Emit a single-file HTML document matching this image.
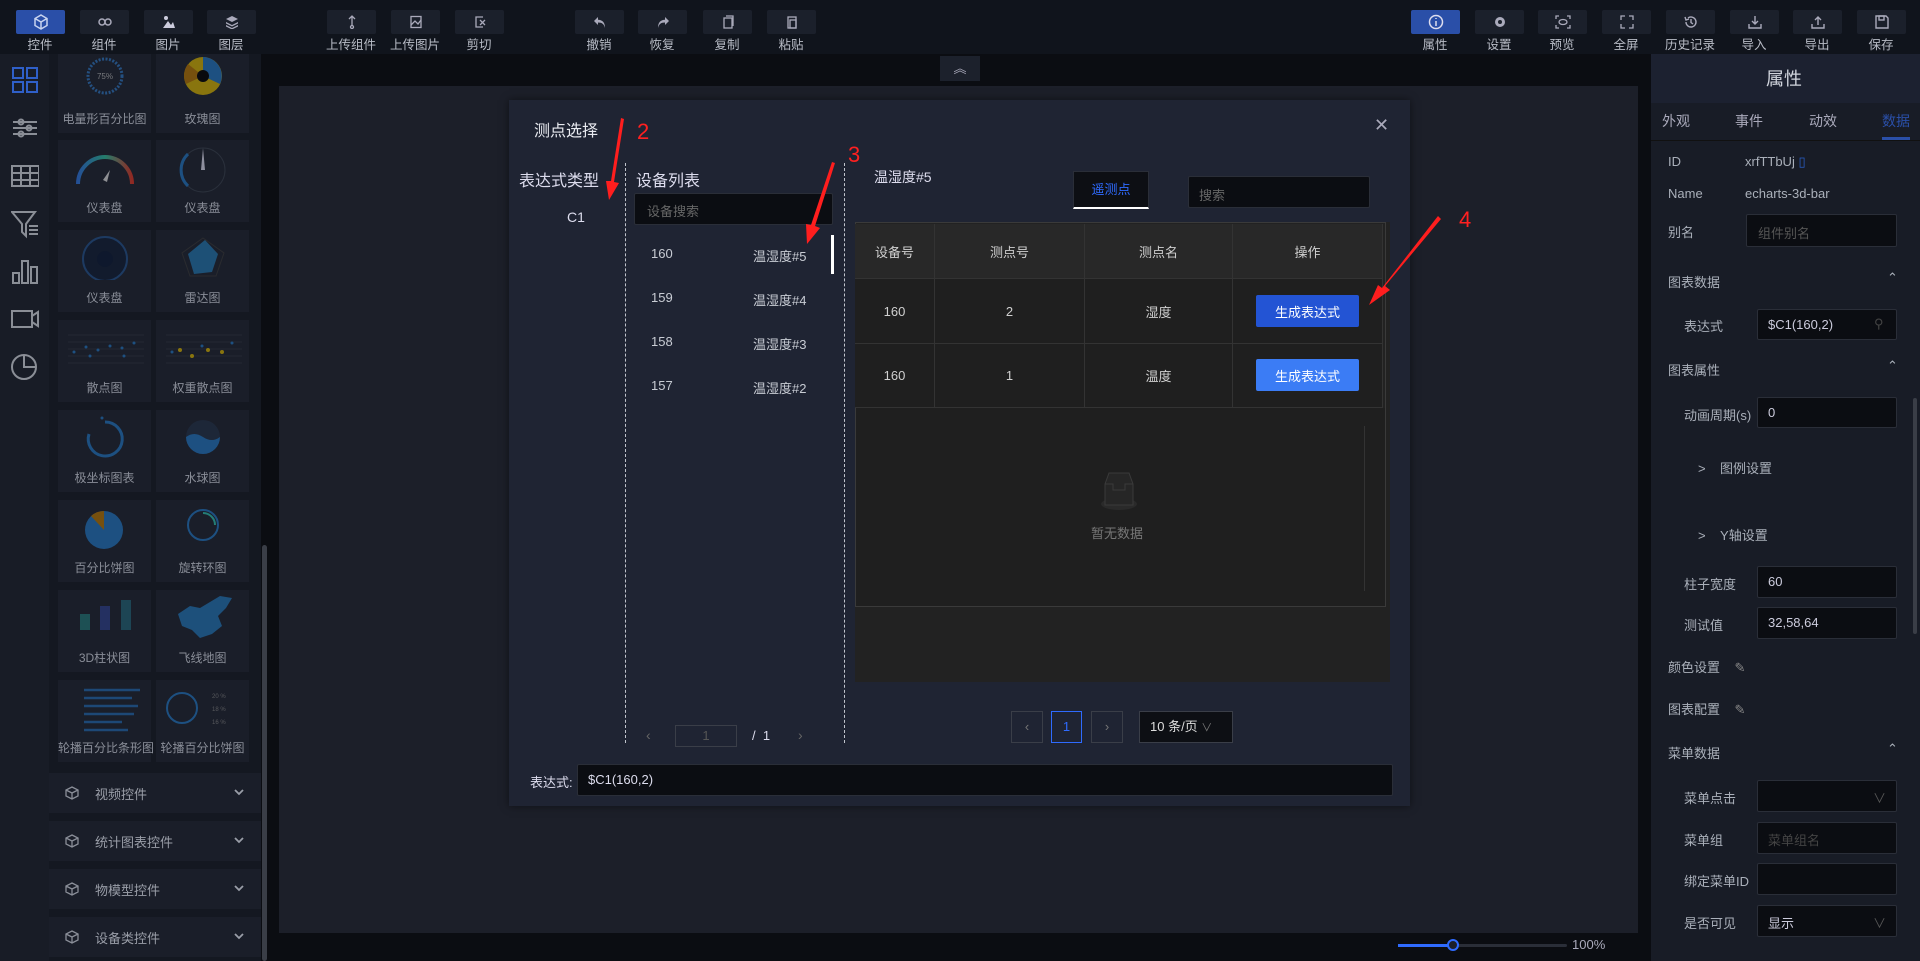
<!DOCTYPE html>
<html><head><meta charset="utf-8"><style>
*{margin:0;padding:0;box-sizing:border-box}
body{width:1920px;height:961px;overflow:hidden;background:#0b0d12;font-family:"Liberation Sans","Noto Sans CJK SC",sans-serif;color:#c8ccd4;font-size:13px;position:relative}
.a{position:absolute}
.tb{position:absolute;top:0;left:0;width:1920px;height:54px;background:#10141c}
.btn{position:absolute;top:10px;width:49px;height:24px;background:#1b202b;border-radius:2px;display:flex;align-items:center;justify-content:center}
.btn.on{background:#2a4fa8}
.lbl{position:absolute;top:34px;width:70px;text-align:center;font-size:12.5px;color:#b8bcc6}
.card{position:absolute;width:93px;height:82px;background:#1a1e29}
.card svg{opacity:.65}
.card span{position:absolute;bottom:6px;left:0;width:100%;text-align:center;font-size:12px;color:#8a8e98;white-space:nowrap}
.acc{position:absolute;left:49px;width:212px;height:40px;background:#1a1e29;color:#9a9ea8;font-size:13px}
.t{position:absolute;white-space:nowrap}
.inp{position:absolute;background:#0b0d12;border:1px solid #2a2e38;border-radius:2px}
.cell{position:absolute;display:flex;align-items:center;justify-content:center;font-size:13px;color:#d0d0d0;border-right:1px solid #333;border-bottom:1px solid #333}
.gb{position:absolute;width:103px;height:32px;border-radius:2px;color:#fff;display:flex;align-items:center;justify-content:center;font-size:13px}
.rl{position:absolute;font-size:13px;color:#aab0ba;white-space:nowrap}
</style></head><body>
<div class="tb">
<div class="btn on" style="left:16px"><svg width="14" height="16" viewBox="0 0 14 16" fill="none" stroke="#c8d4f0" stroke-width="1.5"><path d="M7 1 13 4.5V11.5L7 15 1 11.5V4.5Z M1 4.5 7 8 13 4.5 M7 8V15"/></svg></div>
<div class="btn" style="left:80px"><svg width="14" height="10" fill="none" stroke="#aab" stroke-width="1.5"><ellipse cx="4" cy="5" rx="3" ry="3"/><ellipse cx="10" cy="5" rx="3" ry="3"/></svg></div>
<div class="btn" style="left:144px"><svg width="14" height="14"><circle cx="4" cy="3" r="2" fill="#ccd"/><path d="M1 13 6 6 9 10 11 7 13 13Z" fill="#ccd"/></svg></div>
<div class="btn" style="left:207px"><svg width="14" height="14" fill="#aab"><path d="M7 1 13 4 7 7 1 4Z"/><path d="M1 7 7 10 13 7V8.5L7 11.5 1 8.5Z"/><path d="M1 10 7 13 13 10V11.5L7 14.5 1 11.5Z"/></svg></div>
<div class="btn" style="left:327px"><svg width="14" height="14" fill="none" stroke="#aab" stroke-width="1.3"><path d="M7 1V10M4 4 7 1 10 4"/><circle cx="7" cy="12" r="1.5"/></svg></div>
<div class="btn" style="left:391px"><svg width="14" height="14" fill="none" stroke="#aab" stroke-width="1.3"><rect x="2" y="1.5" width="10" height="11"/><path d="M2 10 6 6 9 9 12 5"/></svg></div>
<div class="btn" style="left:455px"><svg width="14" height="14" fill="none" stroke="#aab" stroke-width="1.3"><path d="M10 2H3V12H10"/><path d="M7 5 12 10M12 5 7 10"/></svg></div>
<div class="btn" style="left:575px"><svg width="14" height="14" fill="#aab"><path d="M5 2 1 6 5 10V7.5C9 7.5 11 9 12 13 12 7 9 5 5 4.8Z"/></svg></div>
<div class="btn" style="left:638px"><svg width="14" height="14" fill="#aab"><path d="M9 2 13 6 9 10V7.5C5 7.5 3 9 2 13 2 7 5 5 9 4.8Z"/></svg></div>
<div class="btn" style="left:703px"><svg width="14" height="14" fill="none" stroke="#aab" stroke-width="1.3"><rect x="3" y="3" width="8" height="10"/><path d="M5 1H12V11"/></svg></div>
<div class="btn" style="left:767px"><svg width="14" height="14" fill="none" stroke="#aab" stroke-width="1.3"><rect x="3" y="2" width="8" height="11"/><rect x="5" y="5" width="6" height="8"/></svg></div>
<div class="btn on" style="left:1411px"><svg width="16" height="16" fill="none" stroke="#dde" stroke-width="1.5"><circle cx="8" cy="8" r="6.5"/><path d="M8 7V12M8 4V5"/></svg></div>
<div class="btn" style="left:1475px"><svg width="14" height="14"><circle cx="7" cy="7" r="5" fill="#aab"/><circle cx="7" cy="7" r="2" fill="#1b202b"/></svg></div>
<div class="btn" style="left:1538px"><svg width="16" height="14" fill="none" stroke="#aab" stroke-width="1.3"><path d="M1 4V1H4M12 1H15V4M15 10V13H12M4 13H1V10"/><ellipse cx="8" cy="7" rx="4" ry="2.5"/></svg></div>
<div class="btn" style="left:1602px"><svg width="14" height="14" fill="none" stroke="#aab" stroke-width="1.3"><path d="M1 5V1H5M9 1H13V5M13 9V13H9M5 13H1V9"/></svg></div>
<div class="btn" style="left:1666px"><svg width="14" height="14" fill="none" stroke="#aab" stroke-width="1.4"><path d="M2 7A5 5 0 1 0 4 3"/><path d="M7 4V7.5L9 9M1 2 2 5 5 4"/></svg></div>
<div class="btn" style="left:1730px"><svg width="14" height="14" fill="none" stroke="#aab" stroke-width="1.4"><path d="M7 1V9M4 6 7 9 10 6M1 9V13H13V9"/></svg></div>
<div class="btn" style="left:1793px"><svg width="14" height="14" fill="none" stroke="#aab" stroke-width="1.4"><path d="M7 10V2M4 5 7 2 10 5M1 9V13H13V9"/></svg></div>
<div class="btn" style="left:1857px"><svg width="14" height="14" fill="none" stroke="#aab" stroke-width="1.4"><path d="M1 1H11L13 3V13H1Z"/><rect x="4" y="1" width="5" height="4"/></svg></div>
<div class="lbl" style="left:5px">控件</div><div class="lbl" style="left:69px">组件</div><div class="lbl" style="left:133px">图片</div><div class="lbl" style="left:196px">图层</div>
<div class="lbl" style="left:316px">上传组件</div><div class="lbl" style="left:380px">上传图片</div><div class="lbl" style="left:444px">剪切</div>
<div class="lbl" style="left:564px">撤销</div><div class="lbl" style="left:627px">恢复</div><div class="lbl" style="left:692px">复制</div><div class="lbl" style="left:756px">粘贴</div>
<div class="lbl" style="left:1400px">属性</div><div class="lbl" style="left:1464px">设置</div><div class="lbl" style="left:1527px">预览</div><div class="lbl" style="left:1591px">全屏</div><div class="lbl" style="left:1655px">历史记录</div><div class="lbl" style="left:1719px">导入</div><div class="lbl" style="left:1782px">导出</div><div class="lbl" style="left:1846px">保存</div>
</div>

<div class="a" style="left:0;top:54px;width:49px;height:907px;background:#181c26"></div>
<svg class="a" style="left:11px;top:66px" width="28" height="320" fill="none" stroke="#8a8e96" stroke-width="2">
<g stroke="#2f5fc8"><rect x="2" y="2" width="10" height="10"/><rect x="16" y="2" width="10" height="10"/><rect x="2" y="16" width="10" height="10"/><rect x="16" y="16" width="10" height="10"/></g>
<path d="M2 56H26M2 62H26M2 68H26"/><circle cx="10" cy="56" r="2.5"/><circle cx="18" cy="62" r="2.5"/><circle cx="10" cy="68" r="2.5"/>
<rect x="1" y="100" width="27" height="20"/><path d="M1 107H28M1 114H28M10 100V120M19 100V120"/>
<path d="M1 146H24L15 158V170L11 166V158Z M18 160H27M18 164H27M18 168H27"/>
<rect x="2" y="207" width="6" height="10"/><rect x="11" y="195" width="6" height="22"/><rect x="20" y="201" width="6" height="16"/>
<rect x="1" y="245" width="20" height="16"/><path d="M21 250 27 246V260L21 256"/>
<circle cx="13" cy="301" r="12"/><path d="M13 289V301H25"/>
</svg>

<div class="a" style="left:49px;top:54px;width:212px;height:907px;background:#141821"></div>
<div class="card" style="left:58px;top:54px;height:79px"><svg class="a" style="left:27px;top:2px" width="40" height="40"><circle cx="20" cy="20" r="17" fill="none" stroke="#2a6bb0" stroke-width="3" stroke-dasharray="2 1.5"/><text x="20" y="23" fill="#aaa" font-size="8" text-anchor="middle">75%</text></svg><span>电量形百分比图</span></div>
<div class="card" style="left:156px;top:54px;height:79px"><svg class="a" style="left:20px;top:2px" width="54" height="44"><circle cx="27" cy="20" r="19" fill="#c5a400"/><path d="M27 20V1A19 19 0 0 1 44 28Z" fill="#1f6bb0"/><path d="M27 20 10 28A19 19 0 0 1 12 8Z" fill="#a86b00"/><circle cx="27" cy="20" r="6" fill="#000"/></svg><span>玫瑰图</span></div>
<div class="card" style="left:58px;top:140px"><svg class="a" style="left:16px;top:10px" width="62" height="36"><path d="M4 34A27 27 0 0 1 58 34" fill="none" stroke="url(#g1)" stroke-width="4"/><defs><linearGradient id="g1"><stop offset="0" stop-color="#2a6bd0"/><stop offset=".5" stop-color="#2ab090"/><stop offset="1" stop-color="#d03020"/></linearGradient></defs><path d="M29 30 36 20 33 32Z" fill="#ccc"/></svg><span>仪表盘</span></div>
<div class="card" style="left:156px;top:140px"><svg class="a" style="left:20px;top:4px" width="54" height="50"><circle cx="27" cy="26" r="22" fill="none" stroke="#333a46" stroke-width="1"/><path d="M12 42A22 22 0 0 1 12 10" fill="none" stroke="#1f6bb0" stroke-width="3"/><path d="M27 4 29 26 25 26Z" fill="#ccd"/></svg><span>仪表盘</span></div>
<div class="card" style="left:58px;top:230px"><svg class="a" style="left:20px;top:4px" width="54" height="46"><circle cx="27" cy="25" r="22" fill="#0f1a30" stroke="#1f4a80" stroke-width="2"/><circle cx="27" cy="25" r="8" fill="#081530"/></svg><span>仪表盘</span></div>
<div class="card" style="left:156px;top:230px"><svg class="a" style="left:20px;top:4px" width="54" height="46"><path d="M27 4 48 19 40 42 14 42 6 19Z" fill="none" stroke="#333"/><path d="M29 6 42 20 36 38 18 40 12 20Z" fill="#1f6ba0"/></svg><span>雷达图</span></div>
<div class="card" style="left:58px;top:320px"><svg class="a" style="left:6px;top:10px" width="82" height="40" fill="#1f6bb0"><path d="M4 5H80M4 12H80M4 19H80M4 26H80M4 33H80" stroke="#2a2e38"/><circle cx="10" cy="22" r="1.5"/><circle cx="22" cy="17" r="1.5"/><circle cx="34" cy="20" r="1.5"/><circle cx="46" cy="16" r="1.5"/><circle cx="58" cy="18" r="1.5"/><circle cx="70" cy="13" r="1.5"/><circle cx="26" cy="26" r="1.5"/><circle cx="60" cy="26" r="1.5"/></svg><span>散点图</span></div>
<div class="card" style="left:156px;top:320px"><svg class="a" style="left:6px;top:10px" width="82" height="40" fill="#1f6bb0"><path d="M4 5H80M4 12H80M4 19H80M4 26H80M4 33H80" stroke="#2a2e38"/><circle cx="18" cy="20" r="2" fill="#c5a400"/><circle cx="30" cy="26" r="2" fill="#c5a400"/><circle cx="46" cy="20" r="2" fill="#c5a400"/><circle cx="60" cy="22" r="2" fill="#c5a400"/><circle cx="10" cy="22" r="1.5"/><circle cx="40" cy="16" r="1.5"/><circle cx="70" cy="13" r="1.5"/></svg><span>权重散点图</span></div>
<div class="card" style="left:58px;top:410px"><svg class="a" style="left:24px;top:4px" width="46" height="46"><path d="M23 8A17 17 0 1 1 7 20" fill="none" stroke="#1f6bb0" stroke-width="3"/><circle cx="20" cy="4" r="1.5" fill="#1f6bb0"/></svg><span>极坐标图表</span></div>
<div class="card" style="left:156px;top:410px"><svg class="a" style="left:24px;top:4px" width="46" height="46"><circle cx="23" cy="23" r="17" fill="#1f2c40"/><path d="M6 23Q14 17 23 23T40 23A17 17 0 0 1 6 23Z" fill="#1f6bb0"/></svg><span>水球图</span></div>
<div class="card" style="left:58px;top:500px"><svg class="a" style="left:20px;top:6px" width="56" height="46"><circle cx="26" cy="24" r="19" fill="#1f6bb0"/><path d="M26 24V5A19 19 0 0 0 13 10Z" fill="#a86b00"/></svg><span>百分比饼图</span></div>
<div class="card" style="left:156px;top:500px"><svg class="a" style="left:26px;top:4px" width="42" height="42"><circle cx="21" cy="21" r="15" fill="none" stroke="#1f6bb0" stroke-width="2"/><path d="M21 9A12 12 0 0 1 33 21" fill="none" stroke="#2ab0a0" stroke-width="2"/></svg><span>旋转环图</span></div>
<div class="card" style="left:58px;top:590px"><svg class="a" style="left:12px;top:8px" width="70" height="40"><rect x="10" y="16" width="10" height="16" fill="#1f6b6b"/><rect x="30" y="8" width="10" height="24" fill="#2a3a80"/><rect x="51" y="2" width="10" height="30" fill="#1f5a6b"/></svg><span>3D柱状图</span></div>
<div class="card" style="left:156px;top:590px"><svg class="a" style="left:14px;top:4px" width="66" height="48"><path d="M8 20 20 12 30 14 40 8 50 2 62 4 56 14 48 22 52 32 42 40 30 44 22 36 12 32Z" fill="#1f6ba8"/></svg><span>飞线地图</span></div>
<div class="card" style="left:58px;top:680px"><svg class="a" style="left:8px;top:6px" width="80" height="50" stroke-width="2.5"><g stroke="#1f5fa0"><path d="M18 4H74M18 12H66M18 20H72M18 28H68M18 36H56M18 44H62"/></g></svg><span>轮播百分比条形图</span></div>
<div class="card" style="left:156px;top:680px"><svg class="a" style="left:6px;top:8px" width="84" height="44"><circle cx="20" cy="20" r="15" fill="none" stroke="#1f6bb0" stroke-width="2"/><g fill="#777" font-size="6"><text x="50" y="10">20 %</text><text x="50" y="23">18 %</text><text x="50" y="36">16 %</text></g></svg><span>轮播百分比饼图</span></div>
<div class="acc" style="top:773px"><svg class="a" style="left:16px;top:13px" width="14" height="14" fill="none" stroke="#8a8e98" stroke-width="1.3"><path d="M7 1 13 4V10L7 13 1 10V4Z M1 4 7 7 13 4M7 7V13"/></svg><div class="t" style="left:46px;top:11px">视频控件</div><svg class="a" style="left:185px;top:16px" width="10" height="7" fill="none" stroke="#9a9ea8" stroke-width="1.8"><path d="M1 1 5 5 9 1"/></svg></div>
<div class="acc" style="top:821px"><svg class="a" style="left:16px;top:13px" width="14" height="14" fill="none" stroke="#8a8e98" stroke-width="1.3"><path d="M7 1 13 4V10L7 13 1 10V4Z M1 4 7 7 13 4M7 7V13"/></svg><div class="t" style="left:46px;top:11px">统计图表控件</div><svg class="a" style="left:185px;top:16px" width="10" height="7" fill="none" stroke="#9a9ea8" stroke-width="1.8"><path d="M1 1 5 5 9 1"/></svg></div>
<div class="acc" style="top:869px"><svg class="a" style="left:16px;top:13px" width="14" height="14" fill="none" stroke="#8a8e98" stroke-width="1.3"><path d="M7 1 13 4V10L7 13 1 10V4Z M1 4 7 7 13 4M7 7V13"/></svg><div class="t" style="left:46px;top:11px">物模型控件</div><svg class="a" style="left:185px;top:16px" width="10" height="7" fill="none" stroke="#9a9ea8" stroke-width="1.8"><path d="M1 1 5 5 9 1"/></svg></div>
<div class="acc" style="top:917px"><svg class="a" style="left:16px;top:13px" width="14" height="14" fill="none" stroke="#8a8e98" stroke-width="1.3"><path d="M7 1 13 4V10L7 13 1 10V4Z M1 4 7 7 13 4M7 7V13"/></svg><div class="t" style="left:46px;top:11px">设备类控件</div><svg class="a" style="left:185px;top:16px" width="10" height="7" fill="none" stroke="#9a9ea8" stroke-width="1.8"><path d="M1 1 5 5 9 1"/></svg></div>
<div class="a" style="left:262px;top:545px;width:5px;height:416px;background:#3a3e47;border-radius:3px"></div>

<div class="a" style="left:279px;top:86px;width:1359px;height:847px;background:#1c1f29"></div>
<div class="a" style="left:940px;top:56px;width:40px;height:25px;background:#1c212c;color:#aab;text-align:center;font-size:13px;line-height:25px">︽</div>
<div class="a" style="left:1398px;top:944px;width:169px;height:3px;background:#2a2e38;border-radius:2px"></div>
<div class="a" style="left:1398px;top:944px;width:55px;height:3px;background:#2f6bff"></div>
<div class="a" style="left:1447px;top:939px;width:12px;height:12px;border-radius:50%;background:#1c1f29;border:2px solid #2f6bff"></div>
<div class="t" style="left:1572px;top:937px;font-size:13px;color:#aab">100%</div>

<div class="a" style="left:509px;top:100px;width:901px;height:706px;background:#1f2433;box-shadow:0 0 8px rgba(0,0,0,.5)"></div>
<div class="t" style="left:534px;top:117px;font-size:16px;color:#e8eaf0">测点选择</div>
<div class="t" style="left:1374px;top:115px;font-size:18px;color:#aab">✕</div>
<div class="t" style="left:519px;top:167px;font-size:16px;color:#dde">表达式类型</div>
<div class="t" style="left:567px;top:209px;font-size:14px;color:#dde">C1</div>
<div class="a" style="left:625px;top:163px;height:580px;border-left:1px dashed #c0c4cc"></div>
<div class="a" style="left:844px;top:163px;height:580px;border-left:1px dashed #c0c4cc"></div>
<div class="t" style="left:636px;top:167px;font-size:16px;color:#dde">设备列表</div>
<div class="inp" style="left:634px;top:193px;width:199px;height:32px"><span class="t" style="left:12px;top:7px;color:#666">设备搜索</span></div>
<div class="t" style="left:651px;top:246px;font-size:13px">160</div><div class="t" style="left:753px;top:246px">温湿度#5</div>
<div class="t" style="left:651px;top:290px">159</div><div class="t" style="left:753px;top:290px">温湿度#4</div>
<div class="t" style="left:651px;top:334px">158</div><div class="t" style="left:753px;top:334px">温湿度#3</div>
<div class="t" style="left:651px;top:378px">157</div><div class="t" style="left:753px;top:378px">温湿度#2</div>
<div class="a" style="left:831px;top:235px;width:3px;height:39px;background:#fff"></div>
<div class="t" style="left:646px;top:727px;color:#666;font-size:14px">‹</div>
<div class="a" style="left:675px;top:725px;width:62px;height:22px;border:1px solid #3a3e48;text-align:center;color:#555;line-height:20px">1</div>
<div class="t" style="left:752px;top:728px;color:#dde">/&nbsp;&nbsp;1</div>
<div class="t" style="left:798px;top:727px;color:#666;font-size:14px">›</div>

<div class="t" style="left:874px;top:167px;font-size:14px;color:#dde">温湿度#5</div>
<div class="a" style="left:1073px;top:171px;width:76px;height:38px;background:#0d0f14;border:1px solid #2a2e38;border-bottom:2px solid #fff;color:#2f6bff;text-align:center;line-height:36px">遥测点</div>
<div class="inp" style="left:1188px;top:176px;width:182px;height:32px"><span class="t" style="left:10px;top:8px;color:#666">搜索</span></div>
<div class="a" style="left:855px;top:222px;width:535px;height:460px;background:#222"></div>
<div class="a" style="left:855px;top:222px;width:531px;height:385px;border:1px solid #3a3a3a"></div>
<div class="cell" style="left:855px;top:224px;width:80px;height:55px;background:#282828">设备号</div>
<div class="cell" style="left:935px;top:224px;width:150px;height:55px;background:#282828">测点号</div>
<div class="cell" style="left:1085px;top:224px;width:148px;height:55px;background:#282828">测点名</div>
<div class="cell" style="left:1233px;top:224px;width:150px;height:55px;background:#282828">操作</div>
<div class="cell" style="left:855px;top:279px;width:80px;height:65px;background:#1f1f1f">160</div>
<div class="cell" style="left:935px;top:279px;width:150px;height:65px;background:#1f1f1f">2</div>
<div class="cell" style="left:1085px;top:279px;width:148px;height:65px;background:#1f1f1f">湿度</div>
<div class="cell" style="left:1233px;top:279px;width:150px;height:65px;background:#1f1f1f"></div>
<div class="cell" style="left:855px;top:344px;width:80px;height:64px;background:#1f1f1f">160</div>
<div class="cell" style="left:935px;top:344px;width:150px;height:64px;background:#1f1f1f">1</div>
<div class="cell" style="left:1085px;top:344px;width:148px;height:64px;background:#1f1f1f">温度</div>
<div class="cell" style="left:1233px;top:344px;width:150px;height:64px;background:#1f1f1f"></div>
<div class="gb" style="left:1256px;top:295px;background:#2354d4">生成表达式</div>
<div class="gb" style="left:1256px;top:359px;background:#3b7cf5">生成表达式</div>
<div class="a" style="left:856px;top:408px;width:529px;height:198px;background:#1f1f1f"></div>
<div class="a" style="left:1364px;top:426px;width:1px;height:165px;background:#333"></div>
<svg class="a" style="left:1092px;top:470px" width="54" height="44"><ellipse cx="27" cy="34" rx="18" ry="6" fill="#2a2a2a"/><path d="M13 14 17 3H37L41 14V35H13Z" fill="#262626" stroke="#3a3a3a"/><path d="M13 14H21V20H33V14H41" fill="none" stroke="#3a3a3a"/></svg>
<div class="t" style="left:1091px;top:523px;color:#777">暂无数据</div>
<div class="a" style="left:1011px;top:711px;width:32px;height:32px;border:1px solid #3a3e48;color:#777;text-align:center;line-height:30px">‹</div>
<div class="a" style="left:1051px;top:711px;width:31px;height:32px;border:1px solid #2f6bff;color:#2f6bff;text-align:center;line-height:30px">1</div>
<div class="a" style="left:1091px;top:711px;width:32px;height:32px;border:1px solid #3a3e48;color:#777;text-align:center;line-height:30px">›</div>
<div class="a" style="left:1139px;top:711px;width:94px;height:32px;border:1px solid #3a3e48;background:#0d0f14;color:#ddd;padding-left:10px;line-height:30px">10 条/页 <span style="color:#777;font-size:11px">∨</span></div>
<div class="t" style="left:530px;top:772px;color:#dde">表达式:</div>
<div class="inp" style="left:577px;top:764px;width:816px;height:32px;background:#0b0d12"><span class="t" style="left:10px;top:7px;color:#dde">$C1(160,2)</span></div>

<svg class="a" style="left:0;top:0" width="1920" height="961" fill="#ff1e1e">
<path d="M621 118 624 119 614 182 619 183 609 200 606 181 611 181Z"/>
<path d="M832 162 835 163 815 226 820 228 807 244 806 224 811 225Z"/>
<path d="M1438 216 1441 219 1385 286 1390 290 1369 305 1378 285 1382 288Z"/>
<path d="M1822 259 1825 258 1867 300 1871 296 1873 316 1855 306 1860 303Z"/>
<g font-size="22" font-family="Liberation Sans,sans-serif" fill="#ff2020"><text x="637" y="139">2</text><text x="848" y="162">3</text><text x="1459" y="227">4</text><text x="1809" y="251">1</text></g>
</svg>

<div class="a" style="left:1651px;top:54px;width:269px;height:907px;background:#181c26"></div>
<div class="a" style="left:1651px;top:54px;width:269px;height:49px;background:#1c2130"></div>
<div class="t" style="left:1766px;top:65px;font-size:18px;color:#d0d4dc">属性</div>
<div class="t" style="left:1662px;top:111px;font-size:14px;color:#aab">外观</div>
<div class="t" style="left:1735px;top:111px;font-size:14px;color:#aab">事件</div>
<div class="t" style="left:1809px;top:111px;font-size:14px;color:#aab">动效</div>
<div class="t" style="left:1882px;top:111px;font-size:14px;color:#2a4fa8">数据</div>
<div class="a" style="left:1651px;top:140px;width:269px;height:1px;background:#111"></div>
<div class="a" style="left:1882px;top:137px;width:28px;height:3px;background:#2a4fa8"></div>
<div class="a" style="left:1913px;top:398px;width:4px;height:236px;background:#3a3e47;border-radius:2px"></div>
<div class="rl" style="left:1668px;top:154px">ID</div><div class="rl" style="left:1745px;top:154px">xrfTTbUj <span style="color:#2a5fc8">▯</span></div>
<div class="rl" style="left:1668px;top:186px">Name</div><div class="rl" style="left:1745px;top:186px">echarts-3d-bar</div>
<div class="rl" style="left:1668px;top:222px">别名</div><div class="inp" style="left:1746px;top:214px;width:151px;height:33px"><span class="t" style="left:11px;top:8px;color:#555">组件别名</span></div>
<div class="rl" style="left:1668px;top:272px">图表数据</div><div class="rl" style="left:1887px;top:270px">⌃</div>
<div class="rl" style="left:1684px;top:316px">表达式</div><div class="inp" style="left:1757px;top:309px;width:140px;height:31px"><span class="t" style="left:10px;top:7px;color:#ccd">$C1(160,2)</span><span class="t" style="left:116px;top:6px;color:#444">⚲</span></div>
<div class="rl" style="left:1668px;top:360px">图表属性</div><div class="rl" style="left:1887px;top:358px">⌃</div>
<div class="rl" style="left:1684px;top:405px">动画周期(s)</div><div class="inp" style="left:1757px;top:397px;width:140px;height:31px"><span class="t" style="left:10px;top:7px;color:#ccd">0</span></div>
<div class="rl" style="left:1698px;top:458px">&gt;&nbsp;&nbsp;&nbsp;&nbsp;图例设置</div>
<div class="rl" style="left:1698px;top:525px">&gt;&nbsp;&nbsp;&nbsp;&nbsp;Y轴设置</div>
<div class="rl" style="left:1684px;top:574px">柱子宽度</div><div class="inp" style="left:1757px;top:566px;width:140px;height:32px"><span class="t" style="left:10px;top:7px;color:#ccd">60</span></div>
<div class="rl" style="left:1684px;top:615px">测试值</div><div class="inp" style="left:1757px;top:607px;width:140px;height:32px"><span class="t" style="left:10px;top:7px;color:#ccd">32,58,64</span></div>
<div class="rl" style="left:1668px;top:657px">颜色设置 &nbsp;&nbsp;&nbsp;<span style="color:#888">✎</span></div>
<div class="rl" style="left:1668px;top:699px">图表配置 &nbsp;&nbsp;&nbsp;<span style="color:#888">✎</span></div>
<div class="rl" style="left:1668px;top:743px">菜单数据</div><div class="rl" style="left:1887px;top:741px">⌃</div>
<div class="rl" style="left:1684px;top:788px">菜单点击</div><div class="inp" style="left:1757px;top:780px;width:140px;height:32px"><span class="t" style="left:115px;top:7px;color:#555">∨</span></div>
<div class="rl" style="left:1684px;top:830px">菜单组</div><div class="inp" style="left:1757px;top:822px;width:140px;height:32px"><span class="t" style="left:10px;top:7px;color:#444">菜单组名</span></div>
<div class="rl" style="left:1684px;top:871px">绑定菜单ID</div><div class="inp" style="left:1757px;top:863px;width:140px;height:32px"></div>
<div class="rl" style="left:1684px;top:913px">是否可见</div><div class="inp" style="left:1757px;top:905px;width:140px;height:32px"><span class="t" style="left:10px;top:7px;color:#ccd">显示</span><span class="t" style="left:115px;top:7px;color:#555">∨</span></div>
</body></html>
